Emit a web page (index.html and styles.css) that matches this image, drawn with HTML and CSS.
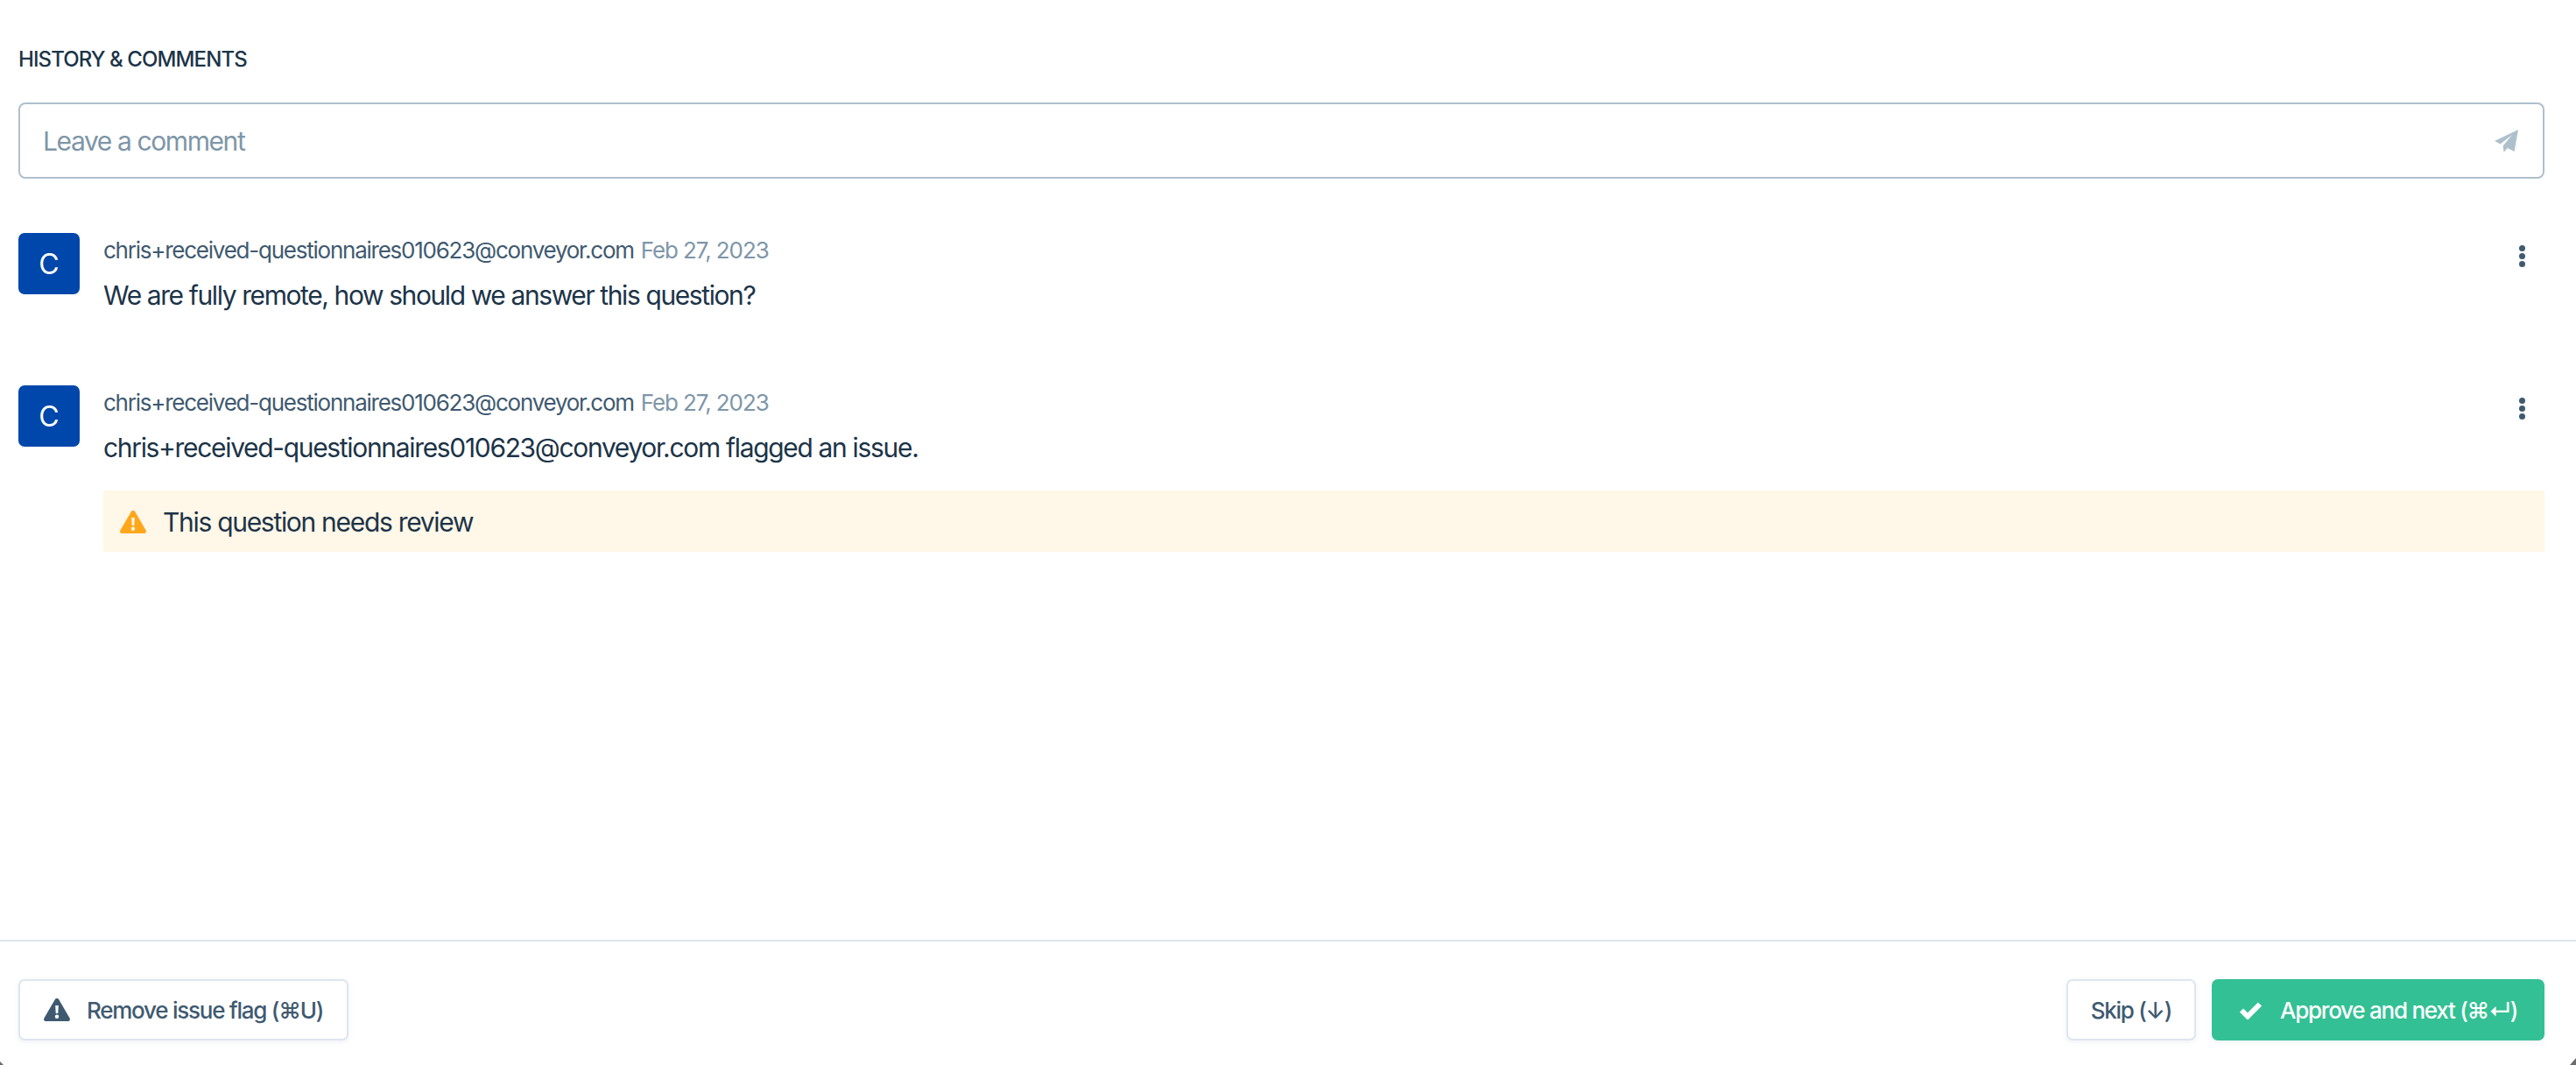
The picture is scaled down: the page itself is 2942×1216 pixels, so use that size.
FILE: index.html
```html
<!DOCTYPE html>
<html lang="en">
<head>
<meta charset="utf-8">
<title>History &amp; Comments</title>
<link rel="stylesheet" href="styles.css">
</head>
<body>
<main class="panel">
  <section class="content">
    <h2 class="heading">HISTORY &amp; COMMENTS</h2>
    <div class="comment-box">
      <span class="placeholder">Leave a comment</span>
      <svg class="send" viewBox="0 0 27 26"><path d="M27 0 22.6 25 14.6 21 10.6 26 9.6 18.6 20 6 6.6 16.4 0 13Z"/></svg>
    </div>
    <article class="entry">
      <div class="avatar">C</div>
      <div class="body">
        <div class="meta"><span class="author">chris+received-questionnaires010623@conveyor.com</span><span class="date">Feb 27, 2023</span></div>
        <p class="text">We are fully remote, how should we answer this question?</p>
      </div>
      <div class="dots"><i></i><i></i><i></i></div>
    </article>
    <article class="entry">
      <div class="avatar">C</div>
      <div class="body">
        <div class="meta"><span class="author">chris+received-questionnaires010623@conveyor.com</span><span class="date">Feb 27, 2023</span></div>
        <p class="text">chris+received-questionnaires010623@conveyor.com flagged an issue.</p>
        <div class="flag">
          <svg class="warn" viewBox="0 0 30 26"><path fill-rule="evenodd" d="M15 0c1 0 1.900.5 2.400 1.400l12.200 21c1 1.700-.2 3.600-2.300 3.600H2.700C.6 26-.6 24.100.4 22.400l12.200-21C13.100.5 14 0 15 0ZM13.200 8l.5 9h2.600l.5-9ZM15 18.500a2.200 2.200 0 1 0 0 4.400 2.200 2.200 0 0 0 0-4.400Z"/></svg>
          <span>This question needs review</span>
        </div>
      </div>
      <div class="dots"><i></i><i></i><i></i></div>
    </article>
  </section>
  <footer class="footer">
    <button class="btn">
      <svg class="btn-warn" viewBox="0 0 30 26"><path fill-rule="evenodd" d="M15 0c1 0 1.900.5 2.400 1.400l12.200 21c1 1.700-.2 3.600-2.300 3.600H2.700C.6 26-.6 24.100.4 22.400l12.200-21C13.100.5 14 0 15 0ZM13.200 8l.5 9h2.600l.5-9ZM15 18.500a2.200 2.200 0 1 0 0 4.400 2.200 2.200 0 0 0 0-4.400Z"/></svg>
      Remove issue flag (⌘U)
    </button>
    <div class="actions">
      <button class="btn btn-skip">Skip (↓)</button>
      <button class="btn btn-primary">
        <svg class="check" viewBox="0 0 27 21"><path d="M3 10.500 10 17.500 24 3.500" fill="none" stroke="#fff" stroke-width="6"/></svg>
        Approve and next (⌘↵)
      </button>
    </div>
  </footer>
</main>
</body>
</html>
```
FILE: styles.css
```css
* { box-sizing: border-box; }
html, body { margin: 0; height: 100%; background: #fff; }
body {
  font-family: Inter, "Liberation Sans", "DejaVu Sans", sans-serif;
  color: #1c3448;
}
.panel {
  position: relative;
  height: 1216px;
  display: flex;
  flex-direction: column;
  overflow: hidden;
}
.panel::before,
.panel::after {
  content: "";
  position: absolute;
  bottom: 0;
  background: #6b6b6b;
}
.panel::before { left: 0; width: 4px; height: 4px; clip-path: polygon(0 0, 100% 100%, 0 100%); }
.panel::after { right: 0; width: 7px; height: 8px; clip-path: polygon(100% 0, 100% 100%, 0 100%); }
.content { flex: 1; padding: 53px 36px 0 21px; }
.heading {
  margin: 0 0 34px;
  font-size: 24px;
  line-height: 30px;
  font-weight: 500;
  letter-spacing: -0.9px;
}
.comment-box {
  height: 87px;
  border: 2px solid #afc0cd;
  border-radius: 8px;
  display: flex;
  align-items: center;
  justify-content: space-between;
  padding: 0 28px 0 26px;
  margin-bottom: 62px;
}
.placeholder { font-size: 30px; letter-spacing: -1.4px; color: #7e96a8; }
.send { width: 27px; height: 26px; fill: #afc0cd; }
.entry { position: relative; display: flex; margin-bottom: 84px; }
.avatar {
  width: 70px;
  height: 70px;
  flex: none;
  border-radius: 7px;
  background: #0047ab;
  color: #fff;
  font-size: 32px;
  display: flex;
  align-items: center;
  justify-content: center;
}
.body { flex: 1; margin-left: 27px; min-width: 0; padding-top: 2px; }
.meta { font-size: 26px; line-height: 36px; letter-spacing: -1.24px; color: #3f5a70; }
.date { margin-left: 8px; letter-spacing: -1.1px; color: #7e96a8; }
.text { margin: 14px 0 0; font-size: 30px; line-height: 38px; letter-spacing: -1.4px; }
.entry + .entry .text { letter-spacing: -1.33px; }
.flag {
  margin-top: 30px;
  height: 70px;
  background: #fff7e8;
  display: flex;
  align-items: center;
  padding-left: 19px;
  padding-top: 2px;
  font-size: 30px;
  letter-spacing: -1.3px;
}
.warn { width: 30px; height: 26px; fill: #ffa71a; margin-right: 19px; }
.dots {
  position: absolute;
  top: 14px;
  right: 22px;
  display: flex;
  flex-direction: column;
  gap: 2px;
}
.dots i { width: 7px; height: 7px; border-radius: 50%; background: #3f5a70; display: block; }
.footer {
  height: 143px;
  border-top: 2px solid #dde6ef;
  display: flex;
  align-items: flex-start;
  justify-content: space-between;
  padding: 43px 36px 0 21px;
}
.actions { display: flex; gap: 18px; }
.btn {
  height: 70px;
  font: inherit;
  font-size: 26px;
  font-weight: 500;
  letter-spacing: -1.25px;
  color: #3f5a70;
  background: #fff;
  border: 2px solid #dde6ef;
  border-radius: 7px;
  box-shadow: 0 2px 6px rgba(60, 90, 120, .08);
  padding: 0 27px;
  display: flex;
  align-items: center;
}
.btn-warn { width: 30px; height: 26px; fill: #3f5a70; margin-right: 19px; }
.btn-skip { padding: 0 26px; }
.btn-primary { background: #33c094; border-color: #33c094; color: #fff; padding: 0 27px 0 29px; width: 380px; }
.check { width: 27px; height: 21px; margin-right: 20px; }
```
